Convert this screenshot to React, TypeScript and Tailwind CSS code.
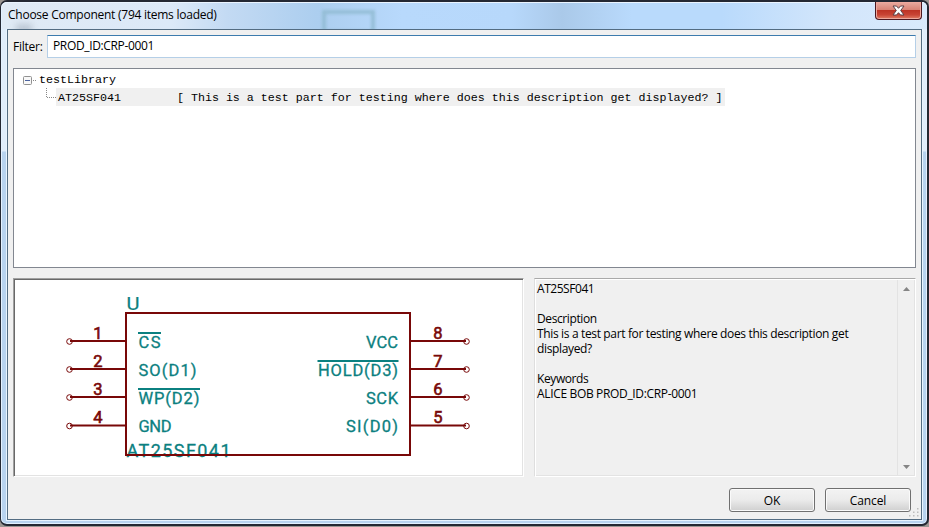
import React from "react";

const UI = "font-['Open_Sans','Noto_Sans',sans-serif]";
const MAROON = "#780808";
const TEAL = "#0b8080";

type Pin = { num: string; name: string; y: number; width: number; over?: boolean };

const leftPins: Pin[] = [
  { num: "1", name: "CS", y: 62, width: 22, over: true },
  { num: "2", name: "SO(D1)", y: 90, width: 58 },
  { num: "3", name: "WP(D2)", y: 118, width: 61, over: true },
  { num: "4", name: "GND", y: 146.5, width: 33 },
];

const rightPins: Pin[] = [
  { num: "8", name: "VCC", y: 62, width: 32 },
  { num: "7", name: "HOLD(D3)", y: 90, width: 80, over: true },
  { num: "6", name: "SCK", y: 118, width: 32 },
  { num: "5", name: "SI(D0)", y: 146.5, width: 52 },
];

function PinView({ pin, right }: { pin: Pin; right?: boolean }) {
  const x = right ? 382 - pin.width + 2 : 124.5;
  const circle = right ? 452.5 : 55.5;
  return (
    <g>
      <path d={right ? `M396 ${pin.y}H452` : `M56 ${pin.y}H112`} stroke={MAROON} strokeWidth="2" />
      <circle cx={circle} cy={pin.y + 0.5} r="2.8" fill="none" stroke={MAROON} strokeWidth="1" />
      <text x={right ? 424 : 84} y={pin.y - 2.5} fontSize="16.5" fill={MAROON} stroke={MAROON} strokeWidth="0.6" textAnchor="middle">{pin.num}</text>
      <text x={x} y={pin.y + 6.5} fontSize="16.5" fill={TEAL} stroke={TEAL} strokeWidth="0.3" textLength={pin.width} lengthAdjust="spacing">{pin.name}</text>
      {pin.over && <path d={`M${x - 0.5} ${pin.y - 8}h${pin.width + 1}`} stroke={TEAL} strokeWidth="2" />}
    </g>
  );
}

function Schematic() {
  return (
    <svg width="508" height="196" viewBox="0 0 508 196" className="block font-['Roboto',sans-serif]">
      <rect x="112" y="34" width="284" height="142" fill="none" stroke={MAROON} strokeWidth="2" />
      <text x="112.5" y="30.500" fontSize="18" fill={TEAL} stroke={TEAL} strokeWidth="0.2" textLength="13" lengthAdjust="spacingAndGlyphs">U</text>
      <text x="112.5" y="178" fontSize="18" fill={TEAL} stroke={TEAL} strokeWidth="0.3" textLength="104" lengthAdjust="spacing">AT25SF041</text>
      <path d="M112 176H396" stroke={MAROON} strokeWidth="2" />
      {leftPins.map((p) => <PinView key={p.num} pin={p} />)}
      {rightPins.map((p) => <PinView key={p.num} pin={p} right />)}
    </svg>
  );
}

function DialogButton({ children }: { children: React.ReactNode }) {
  return (
    <button className="h-6 w-[86px] rounded-[3px] border border-[#707070] bg-linear-to-b from-[#f3f3f3] from-0% via-[#ebebeb] via-50% to-[#cfcfcf] text-center text-[12px] leading-[21px] tracking-[-0.1px] shadow-[inset_0_0_0_1px_#fafafa]">
      {children}
    </button>
  );
}

function TitleBar() {
  return (
    <div className="relative flex h-[27px] shrink-0 justify-between overflow-hidden rounded-t-[5px] bg-[linear-gradient(90deg,#e0eaf5_0px,#dce9f8_170px,#c3daf3_225px,#acceef_315px,#b8d9fc_400px,#b7d8fb_510px,#aac9e9_560px,#b9dafc_630px,#b9dafc_720px,#d3e6fb_830px,#d9eafc_100%)] shadow-[inset_0_1px_0_#eaf4ff]">
      <div className="absolute left-[320px] top-[8px] h-[24px] w-[53px] border-4 border-[#8eb9cf] opacity-80 blur-[1.5px]" />
      <div className="absolute left-[14px] top-[22px] h-[10px] w-[16px] bg-[#bdc8d5] blur-[3px]" />
      <h1 className="relative pl-[6px] pt-[4px] text-[12px] leading-[18px] tracking-[-0.25px]">Choose Component (794 items loaded)</h1>
      <button className="relative mr-[5px] flex h-[18px] w-[47px] items-center justify-center rounded-b-[4px] border border-t-0 border-[#4b1820] bg-[linear-gradient(#e9aba0_0%,#d98476_45%,#bd3425_50%,#c84434_75%,#e07e65_100%)] shadow-[inset_0_0_0_1px_#eda99e]">
        <svg width="13" height="11" viewBox="0 0 13 11">
          <path d="M1 1h3.5l2 2.3L8.500 1H12L8.700 5.500 12 10H8.500l-2-2.300L4.500 10H1l3.300-4.500z" fill="#fff" stroke="#594047" strokeWidth="1" />
        </svg>
      </button>
    </div>
  );
}

export default function App() {
  return (
    <div className={`h-[527px] w-[929px] overflow-hidden bg-[#9b9692] text-black ${UI}`}>
      <div className="flex h-[526px] w-[929px] flex-col overflow-hidden rounded-[7px] border-2 border-l-[1.5px] border-[#242833] bg-[linear-gradient(#e0edfb_0px,#e0edfb_149px,#b8d3ef_150px,#b8d3ef_100%)] pl-px shadow-[inset_0_0_0_1px_#e3f1ff]">
        <TitleBar />
        <div className="ml-[5px] mr-[5px] flex h-[491px] flex-col border border-[#536c82] bg-[#f0f0f0] px-[5px] pt-[5px] shadow-[0_0_0_1px_#e8f4ff]">
          <div className="flex h-[23px] shrink-0 items-center">
            <label className="w-[34px] text-[12px] leading-[22px] tracking-[-0.25px]">Filter:</label>
            <div className="h-[23px] flex-1 border border-[#b5cfe7] border-t-[#3d7bad] bg-white pl-[5px] text-[12px] leading-[20px] tracking-[-0.35px]">PROD_ID:CRP-0001</div>
          </div>
          <div className="mt-[10px] h-[200px] shrink-0 border border-[#828790] bg-white pt-px font-['Liberation_Mono',monospace] text-[11.667px]">
            <div className="flex h-[18px] items-center pl-[9px]">
              <svg width="16" height="9" viewBox="0 0 16 9" className="mt-[3px]">
                <rect x=".5" y=".5" width="8" height="8" rx="1" fill="#f8f8f8" stroke="#919191" />
                <path d="M2 4.500h5" stroke="#4b639f" />
                <path d="M10 4.500h4" stroke="#888" strokeDasharray="1 1" />
              </svg>
              <span className="pt-[2px] leading-[18px]">testLibrary</span>
            </div>
            <div className="flex h-[18px] items-center pl-[32px]">
              <svg width="10" height="18" viewBox="0 0 10 18">
                <path d="M.5 0v10M1 9.500h9" fill="none" stroke="#888" strokeDasharray="1 1" />
              </svg>
              <span className="h-[18px] w-[669px] whitespace-pre bg-[#f0f0f0] pl-[2px] leading-[20px]">{"AT25SF041        [ This is a test part for testing where does this description get displayed? ]"}</span>
            </div>
          </div>
          <div className="mt-[10px] flex h-[199px] shrink-0 justify-between">
            <div className="w-[511px] border border-b-white border-l-[#a0a0a0] border-r-white border-t-[#a0a0a0] bg-white shadow-[inset_1px_1px_0_#696969,inset_-1px_-1px_0_#e3e3e3]">
              <Schematic />
            </div>
            <div className="flex w-[382px] border border-b-white border-l-[#dedede] border-r-white border-t-[#a9a9a9] shadow-[inset_1px_1px_0_#fff,inset_-1px_-1px_0_#e3e3e3]">
              <div className="flex-1 whitespace-pre pl-[2px] pt-[2px] text-[12px] leading-[15px] tracking-[-0.2px]">
                <p className="tracking-[-0.45px]">AT25SF041</p>
                <p className="mt-[15px] tracking-[-0.4px]">Description</p>
                <p className="tracking-[-0.35px]">This is a test part for testing where does this description get</p>
                <p className="tracking-[-0.35px]">displayed?</p>
                <p className="mt-[15px] tracking-[-0.4px]">Keywords</p>
                <p className="tracking-[-0.34px]">ALICE BOB PROD_ID:CRP-0001</p>
              </div>
              <div className="my-px mr-px flex w-[17px] flex-col items-center justify-between border-l border-[#e3e3e3] bg-[#f0f0f0] pb-[6px] pt-[7px]">
                <svg width="7" height="4" viewBox="0 0 7 4"><path d="M3.500 0L7 4H0z" fill="#858585" /></svg>
                <svg width="7" height="4" viewBox="0 0 7 4"><path d="M0 0h7L3.500 4z" fill="#858585" /></svg>
              </div>
            </div>
          </div>
          <div className="mt-[11px] flex justify-end gap-[10px] pr-[5px]">
            <DialogButton>OK</DialogButton>
            <DialogButton>Cancel</DialogButton>
          </div>
          <svg width="10" height="10" viewBox="0 0 10 10" className="-mr-[3px] -mt-[5px] self-end">
            <path d="M8 1h1.500v1.500H8zM4 4.500h1.500V6H4zM8 4.500h1.500V6H8zM0 8h1.500v1.500H0zM4 8h1.500v1.500H4zM8 8h1.500v1.500H8z" fill="#bdbdbd" />
          </svg>
        </div>
      </div>
    </div>
  );
}
